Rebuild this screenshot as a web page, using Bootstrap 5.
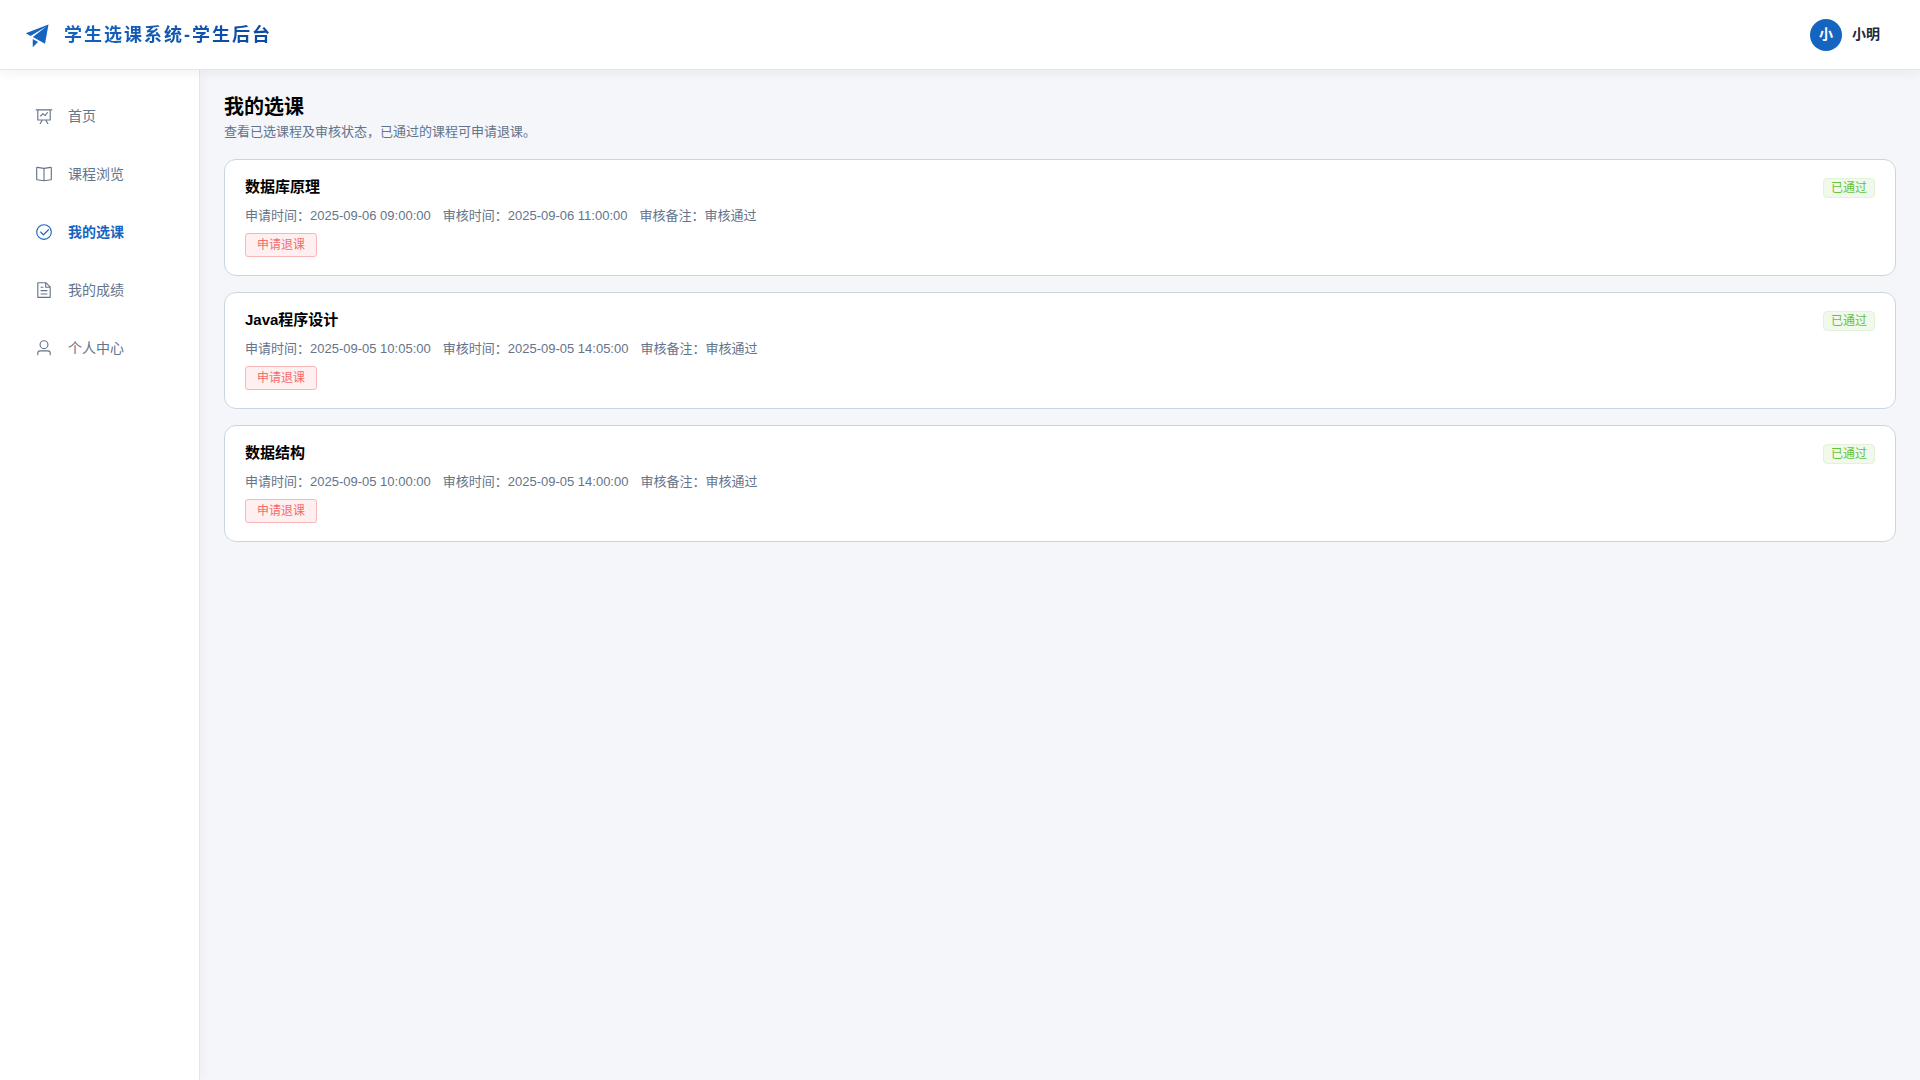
<!DOCTYPE html>
<html lang="zh-CN">
<head>
<meta charset="utf-8">
<meta name="viewport" content="width=device-width, initial-scale=1">
<title>学生选课系统-学生后台</title>
<link href="https://cdn.jsdelivr.net/npm/bootstrap@5.3.0/dist/css/bootstrap.min.css" rel="stylesheet">
<style>
  body { font-family: "Liberation Sans", "Noto Sans CJK SC", sans-serif; font-size: 14px; color: #000; background: #f4f6fa; }
  svg { fill: currentColor; flex-shrink: 0; }
  .topbar { height: 70px; padding: 0 40px 0 24px; background: #fff; border-bottom: 1px solid #e2e8f0; box-shadow: 0 2px 12px rgba(0,0,0,.06); z-index: 2; }
  .brand-link { gap: 12px; color: #1565c0; }
  .brand-title { padding-top: 2px; font-size: 18px; font-weight: 700; letter-spacing: 2px; background: linear-gradient(135deg, #1565c0, #0d47a1); -webkit-background-clip: text; background-clip: text; color: transparent; }
  .user-btn { gap: 10px; font-weight: 700; color: #1e293b; }
  .avatar { width: 32px; height: 32px; background: #1565c0; color: #fff; font-size: 14px; font-weight: 700; }
  .sidebar { width: 200px; padding: 21px 12px; gap: 8px; background: #fff; border-right: 1px solid #e2e8f0; box-shadow: 2px 0 12px rgba(0,0,0,.04); z-index: 1; }
  .sidebar .nav-link { height: 50px; padding: 0 23px; gap: 15px; color: #64748b; }
  .sidebar .nav-link.active { color: #1565c0; font-weight: 700; }
  .content { padding: 24px; min-width: 0; }
  .page-title { font-size: 20px; line-height: 26px; font-weight: 700; margin: 0 0 3px; }
  .page-sub { font-size: 13px; line-height: 18px; color: #64748b; margin: 0 0 18px; }
  .course { padding: 18px 20px; border: 1px solid #cbd5e1; border-radius: 12px; background: #fff; }
  .course-name { font-size: 15px; line-height: 18px; font-weight: 700; margin: 0 0 11px; }
  .course-meta { font-size: 13px; line-height: 18px; gap: 12px; color: #64748b; margin-bottom: 8px; }
  .status { height: 20px; padding: 0 7px; font-size: 12px; line-height: 19px; color: #67c23a; background: #f0f9eb; border: 1px solid #e1f3d8; border-radius: 4px; }
  .drop-btn { height: 24px; padding: 0 11px; font-size: 12px; line-height: 22px; color: #f56c6c; background: #fef0f0; border: 1px solid #fab6b6; border-radius: 3px; }
  .drop-btn:hover { color: #fff; background: #f56c6c; }
</style>
</head>
<body class="d-flex flex-column min-vh-100">
<header class="topbar d-flex align-items-center justify-content-between position-relative">
  <a href="#" class="brand-link d-flex align-items-center text-decoration-none">
    <svg width="28" height="28" viewBox="0 0 1024 1024" aria-hidden="true"><path d="m64 448 832-320-128 704-446.08-243.328L832 192 242.816 545.472zm256 512V657.024L512 768z"/></svg>
    <span class="brand-title">学生选课系统-学生后台</span>
  </a>
  <button type="button" class="user-btn d-flex align-items-center border-0 bg-transparent p-0">
    <span class="avatar rounded-circle d-flex align-items-center justify-content-center">小</span>
    <span>小明</span>
  </button>
</header>
<div class="d-flex flex-grow-1">
  <nav class="sidebar nav flex-column flex-nowrap flex-shrink-0 position-relative">
    <a class="nav-link d-flex align-items-center" href="#"><svg width="18" height="18" viewBox="0 0 1024 1024" aria-hidden="true"><path d="M359.168 768H160a32 32 0 0 1-32-32V192H64a32 32 0 0 1 0-64h896a32 32 0 1 1 0 64h-64v544a32 32 0 0 1-32 32H665.216l110.848 192h-73.856L591.36 768H433.024L322.176 960H248.32zM832 192H192v512h640zM342.656 534.656a32 32 0 1 1-45.312-45.312L444.992 341.76l125.44 94.08L679.04 300.032a32 32 0 1 1 49.92 39.936L581.632 524.224 451.008 426.24 342.656 534.592z"/></svg>首页</a>
    <a class="nav-link d-flex align-items-center" href="#"><svg width="18" height="18" viewBox="0 0 1024 1024" aria-hidden="true"><path d="m512 863.36 384-54.848v-638.72L525.568 222.72a96 96 0 0 1-27.136 0L128 169.792v638.72zM137.024 106.432l370.432 52.928a32 32 0 0 0 9.088 0l370.432-52.928A64 64 0 0 1 960 169.792v638.72a64 64 0 0 1-54.976 63.36l-388.48 55.488a32 32 0 0 1-9.088 0l-388.48-55.488A64 64 0 0 1 64 808.512v-638.72a64 64 0 0 1 73.024-63.36"/><path d="M480 192h64v704h-64z"/></svg>课程浏览</a>
    <a class="nav-link active d-flex align-items-center" aria-current="page" href="#"><svg width="18" height="18" viewBox="0 0 1024 1024" aria-hidden="true"><path d="M512 896a384 384 0 1 0 0-768 384 384 0 0 0 0 768m0 64a448 448 0 1 1 0-896 448 448 0 0 1 0 896"/><path d="M745.344 361.344a32 32 0 0 1 45.312 45.312l-288 288a32 32 0 0 1-45.312 0l-160-160a32 32 0 1 1 45.312-45.312L480 626.752z"/></svg>我的选课</a>
    <a class="nav-link d-flex align-items-center" href="#"><svg width="18" height="18" viewBox="0 0 1024 1024" aria-hidden="true"><path d="M832 384H576V128H192v768h640zm-26.496-64L640 154.496V320zM160 64h480l256 256v608a32 32 0 0 1-32 32H160a32 32 0 0 1-32-32V96a32 32 0 0 1 32-32m160 448h384v64H320zm0-192h160v64H320zm0 384h384v64H320z"/></svg>我的成绩</a>
    <a class="nav-link d-flex align-items-center" href="#"><svg width="18" height="18" viewBox="0 0 1024 1024" aria-hidden="true"><path d="M512 512a192 192 0 1 0 0-384 192 192 0 0 0 0 384m0 64a256 256 0 1 1 0-512 256 256 0 0 1 0 512m320 320v-96a96 96 0 0 0-96-96H288a96 96 0 0 0-96 96v96a32 32 0 1 1-64 0v-96a160 160 0 0 1 160-160h448a160 160 0 0 1 160 160v96a32 32 0 1 1-64 0"/></svg>个人中心</a>
  </nav>
  <main class="content flex-grow-1">
    <h1 class="page-title">我的选课</h1>
    <p class="page-sub">查看已选课程及审核状态，已通过的课程可申请退课。</p>
    <div class="d-flex flex-column gap-3">
      <article class="course d-flex justify-content-between align-items-start">
        <div>
          <h2 class="course-name">数据库原理</h2>
          <div class="course-meta d-flex flex-wrap"><span>申请时间：2025-09-06 09:00:00</span><span>审核时间：2025-09-06 11:00:00</span><span>审核备注：审核通过</span></div>
          <button type="button" class="drop-btn d-block">申请退课</button>
        </div>
        <span class="status">已通过</span>
      </article>
      <article class="course d-flex justify-content-between align-items-start">
        <div>
          <h2 class="course-name">Java程序设计</h2>
          <div class="course-meta d-flex flex-wrap"><span>申请时间：2025-09-05 10:05:00</span><span>审核时间：2025-09-05 14:05:00</span><span>审核备注：审核通过</span></div>
          <button type="button" class="drop-btn d-block">申请退课</button>
        </div>
        <span class="status">已通过</span>
      </article>
      <article class="course d-flex justify-content-between align-items-start">
        <div>
          <h2 class="course-name">数据结构</h2>
          <div class="course-meta d-flex flex-wrap"><span>申请时间：2025-09-05 10:00:00</span><span>审核时间：2025-09-05 14:00:00</span><span>审核备注：审核通过</span></div>
          <button type="button" class="drop-btn d-block">申请退课</button>
        </div>
        <span class="status">已通过</span>
      </article>
    </div>
  </main>
</div>
<script src="https://cdn.jsdelivr.net/npm/bootstrap@5.3.0/dist/js/bootstrap.bundle.min.js"></script>
</body>
</html>
